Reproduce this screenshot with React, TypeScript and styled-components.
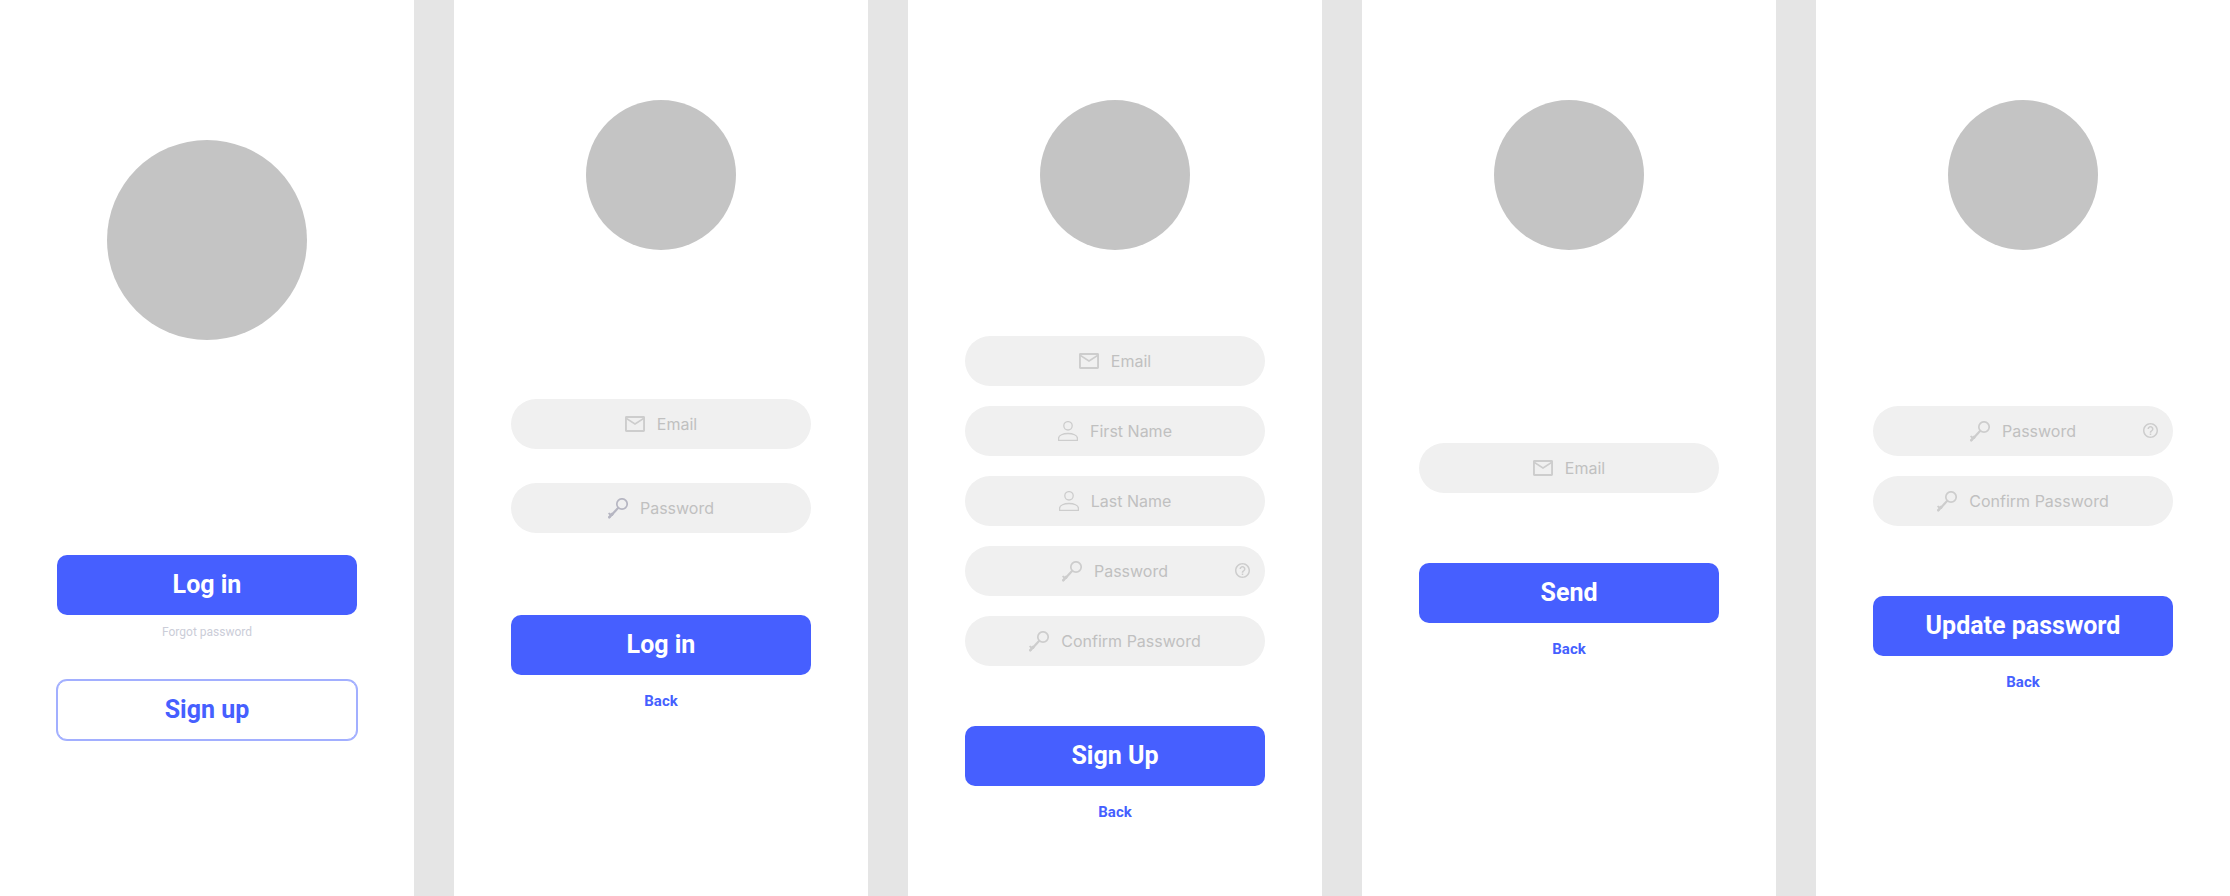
import React from "react";
import styled, { createGlobalStyle } from "styled-components";

const GlobalStyle = createGlobalStyle`
  *, *::before, *::after { box-sizing: border-box; }
  body {
    margin: 0;
    background: #e5e5e5;
    font-family: Roboto, "Liberation Sans", sans-serif;
  }
`;

const Board = styled.main`
  display: grid;
  grid-template-columns: repeat(5, 1fr);
  gap: 40px;
  min-height: 100vh;
`;

const Screen = styled.section<{ $top: number }>`
  display: flex;
  flex-direction: column;
  align-items: center;
  padding: ${(p) => p.$top}px 56px 40px;
  background: #ffffff;
`;

const Avatar = styled.div<{ $size: number }>`
  width: ${(p) => p.$size}px;
  height: ${(p) => p.$size}px;
  flex: none;
  border-radius: 50%;
  background: #c4c4c4;
`;

const Form = styled.form<{ $top: number }>`
  display: flex;
  flex-direction: column;
  align-items: center;
  width: 100%;
  max-width: 300px;
  margin-top: ${(p) => p.$top}px;
`;

const Fields = styled.div<{ $gap: number; $bottom: number }>`
  display: flex;
  flex-direction: column;
  gap: ${(p) => p.$gap}px;
  width: 100%;
  margin-bottom: ${(p) => p.$bottom}px;
`;

const FieldBox = styled.div`
  position: relative;
`;

const Pill = styled.label`
  display: flex;
  align-items: center;
  justify-content: center;
  gap: 12px;
  height: 50px;
  border-radius: 25px;
  background: #f0f0f0;
  cursor: text;
`;

const Glyph = styled.svg<{ $dark?: boolean }>`
  display: block;
  flex: none;
  color: ${(p) => (p.$dark ? "#b6b6c2" : "#cdcdcd")};
`;

const TextInput = styled.input`
  field-sizing: content;
  max-width: 200px;
  height: 24px;
  padding: 0;
  border: 0;
  outline: 0;
  background: transparent;
  font: 400 16px/24px Inter, "Open Sans", sans-serif;
  color: #8a8a8a;

  &::placeholder {
    color: #c0c0c0;
    opacity: 1;
  }
`;

const HelpButton = styled.button`
  position: absolute;
  top: 17px;
  right: 15px;
  padding: 0;
  border: 0;
  background: none;
  cursor: pointer;
`;

const Button = styled.button<{ $outline?: boolean }>`
  width: 100%;
  height: 60px;
  padding: 0;
  border: ${(p) => (p.$outline ? "1px solid #a2afff" : "0")};
  border-radius: 10px;
  box-shadow: ${(p) => (p.$outline ? "0 0 0 1px #a2afff" : "none")};
  background: ${(p) => (p.$outline ? "#ffffff" : "#465fff")};
  color: ${(p) => (p.$outline ? "#465fff" : "#ffffff")};
  font: 700 25px/30px Roboto, "Liberation Sans", sans-serif;
  cursor: pointer;
`;

const BackLink = styled.a`
  margin-top: 16px;
  font-size: 15px;
  font-weight: 700;
  line-height: 20px;
  color: #465fff;
  text-decoration: none;
`;

const ForgotLink = styled.a`
  margin: 9px 0 39px;
  font-size: 12px;
  line-height: 17px;
  color: #cbcdd8;
  text-decoration: none;
`;

type IconName = "mail" | "person" | "key";

const FieldIcon = ({ name, dark }: { name: IconName; dark?: boolean }) => {
  if (name === "mail") {
    return (
      <Glyph width="20" height="16" viewBox="2 4 20 16" fill="currentColor" aria-hidden>
        <path d="M22 5.4c0-.8-.6-1.4-1.4-1.4H3.4C2.6 4 2 4.600 2 5.400v13.200c0 .8.6 1.400 1.400 1.400h17.200c.8 0 1.400-.6 1.400-1.400V5.400zM19.800 5.900L12 10.900 4.200 5.900h15.600zM3.900 18.100V7.800L12 13.100l8.100-5.300v10.300H3.900z" />
      </Glyph>
    );
  }
  if (name === "person") {
    return (
      <Glyph width="20" height="20" viewBox="0 0 20 20" fill="none" stroke="currentColor" strokeWidth="1.3" aria-hidden>
        <circle cx="10" cy="4.8" r="4.2" />
        <path d="M.6 19.4v-2.2c0-3 4.6-4.7 9.4-4.7s9.4 1.7 9.4 4.7v2.2z" />
      </Glyph>
    );
  }
  return (
    <Glyph $dark={dark} width="20" height="21" viewBox="0 0 20 21" fill="none" stroke="currentColor" aria-hidden>
      <circle cx="14" cy="6" r="5.2" strokeWidth="1.7" />
      <path d="M10.3 9.7 1 19.8" strokeWidth="2.2" />
      <path d="M0 15.400 1.300 14.600 2.600 15.400 4 14.600 5.800 16.500 4.600 18 3.400 17.800 2.800 19.200 1.300 20.800 0 20 .2 18.400 1.500 17.300Z" fill="currentColor" stroke="none" />
    </Glyph>
  );
};

type FieldSpec = { label: string; icon: IconName; type?: string; dark?: boolean; help?: boolean };

const Field = ({ label, icon, type = "text", dark, help }: FieldSpec) => (
  <FieldBox>
    <Pill>
      <FieldIcon name={icon} dark={dark} />
      <TextInput type={type} placeholder={label} aria-label={label} />
    </Pill>
    {help && (
      <HelpButton type="button" aria-label="Password help">
        <Glyph width="15" height="15" viewBox="2 2 20 20" fill="currentColor" aria-hidden>
          <path d="M11 18h2v-2h-2v2zm1-16C6.48 2 2 6.48 2 12s4.48 10 10 10 10-4.48 10-10S17.52 2 12 2zm0 18c-4.41 0-8-3.59-8-8s3.59-8 8-8 8 3.59 8 8-3.59 8-8 8zm0-14c-2.21 0-4 1.79-4 4h2c0-1.1.9-2 2-2s2 .9 2 2c0 2-3 1.75-3 5h2c0-2.25 3-2.5 3-5 0-2.21-1.79-4-4-4z" />
        </Glyph>
      </HelpButton>
    )}
  </FieldBox>
);

type FormScreenProps = {
  top: number;
  gap: number;
  bottom: number;
  action: string;
  fields: FieldSpec[];
};

const FormScreen = ({ top, gap, bottom, action, fields }: FormScreenProps) => (
  <Screen $top={100}>
    <Avatar $size={150} />
    <Form $top={top} onSubmit={(e) => e.preventDefault()}>
      <Fields $gap={gap} $bottom={bottom}>
        {fields.map((f) => (
          <Field key={f.label} {...f} />
        ))}
      </Fields>
      <Button type="submit">{action}</Button>
      <BackLink href="#">Back</BackLink>
    </Form>
  </Screen>
);

const email: FieldSpec = { label: "Email", icon: "mail", type: "email" };
const password: FieldSpec = { label: "Password", icon: "key", type: "password" };
const confirm: FieldSpec = { label: "Confirm Password", icon: "key", type: "password" };

export default function App() {
  return (
    <>
      <GlobalStyle />
      <Board>
        <Screen $top={140}>
          <Avatar $size={200} />
          <Form $top={215} onSubmit={(e) => e.preventDefault()}>
            <Button type="submit">Log in</Button>
            <ForgotLink href="#">Forgot password</ForgotLink>
            <Button type="button" $outline>
              Sign up
            </Button>
          </Form>
        </Screen>
        <FormScreen top={149} gap={34} bottom={82} action="Log in" fields={[email, { ...password, dark: true }]} />
        <FormScreen
          top={86}
          gap={20}
          bottom={60}
          action="Sign Up"
          fields={[
            email,
            { label: "First Name", icon: "person" },
            { label: "Last Name", icon: "person" },
            { ...password, help: true },
            confirm,
          ]}
        />
        <FormScreen top={193} gap={20} bottom={70} action="Send" fields={[email]} />
        <FormScreen top={156} gap={20} bottom={70} action="Update password" fields={[{ ...password, help: true }, confirm]} />
      </Board>
    </>
  );
}
